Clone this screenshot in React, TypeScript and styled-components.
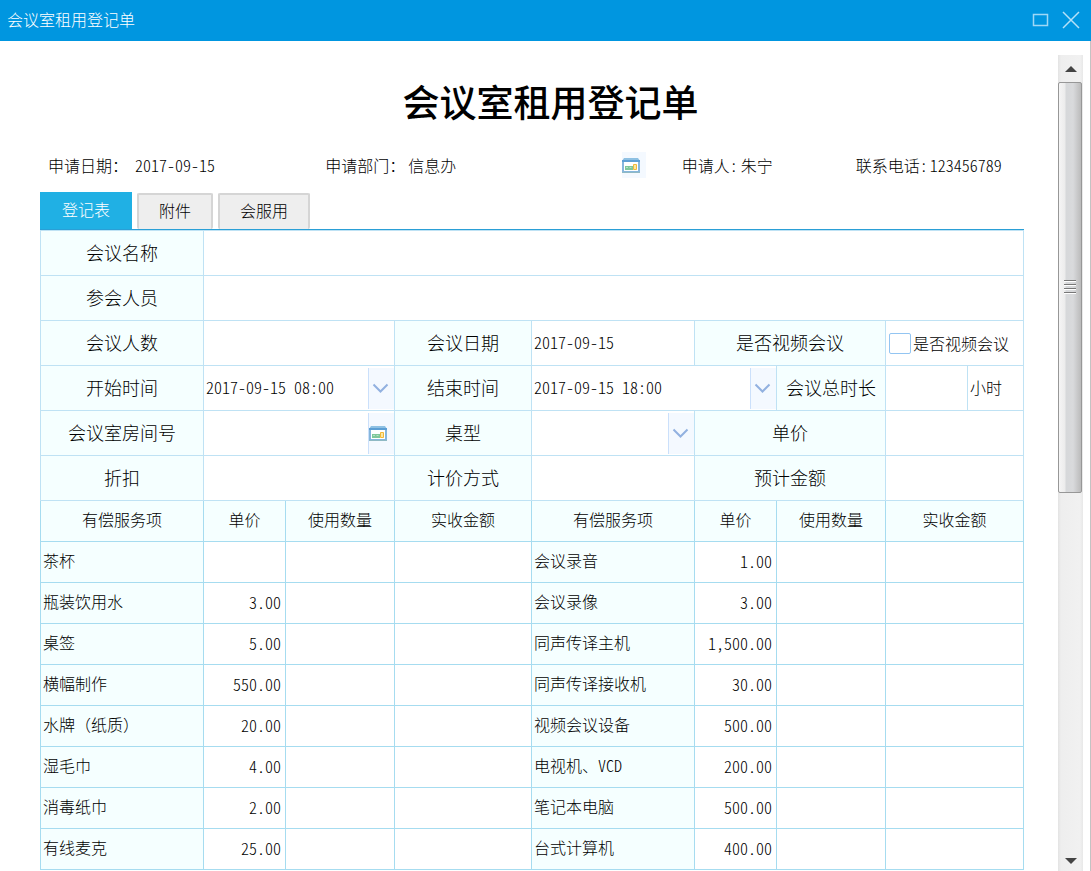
import React from 'react';
import styled, { createGlobalStyle } from 'styled-components';

const FONT = '"Noto Sans CJK SC", "Liberation Sans", sans-serif';
const LINE = '#bfe2f4';
const SERVICE_LINE = '#a6dcf0';
const LABEL_BG = '#f5ffff';

const GlobalStyle = createGlobalStyle`
  *, *::before, *::after { box-sizing: border-box; }
  body {
    margin: 0;
    background: #fff;
    color: #000;
    font: 300 16px/24px ${FONT};
    font-feature-settings: "hwid";
  }
  button, input, select {
    font: inherit;
    font-feature-settings: inherit;
    color: inherit;
  }
`;

const Window = styled.div`
  display: flex;
  flex-direction: column;
  height: 100vh;
`;

const TitleBar = styled.header`
  display: flex;
  flex: none;
  align-items: center;
  justify-content: space-between;
  height: 41px;
  padding: 0 9px 4px 7px;
  background: #0096e0;
  color: #fff;
`;

const WindowButtons = styled.div`
  display: flex;
  gap: 8px;
`;

const WindowButton = styled.button`
  display: flex;
  width: 22px;
  height: 22px;
  padding: 0;
  border: 0;
  background: none;
`;

const Body = styled.div`
  display: flex;
  flex: 1;
  min-height: 0;
  padding: 14px 7px 0 0;
  border-right: 1px solid #c3c3c3;
`;

const Content = styled.main`
  flex: 1;
  min-width: 0;
  overflow: auto;
  scrollbar-width: none;
  padding: 0 34px 0 40px;
`;

const Heading = styled.h1`
  margin: 18px 0 0;
  padding-left: 37px;
  font-size: 37px;
  line-height: 56px;
  font-weight: 500;
  text-align: center;
`;

const Summary = styled.div`
  display: grid;
  grid-template-columns: minmax(0, 277fr) minmax(0, 356fr) minmax(0, 174fr) minmax(0, 168fr);
  margin-top: 23px;
  padding-left: 8px;
  height: 26px;
`;

const SummaryField = styled.div`
  display: flex;
  align-items: center;
  padding-bottom: 2px;
`;

const SummaryInput = styled.input<{ $gap?: number }>`
  flex: 1;
  min-width: 0;
  height: 24px;
  margin: 0;
  padding: 0 0 0 ${(p) => p.$gap ?? 0}px;
  border: 0;
  background: none;
`;

const SummaryPicker = styled.button`
  flex: none;
  width: 24px;
  height: 26px;
  margin-right: 36px;
  padding: 0;
  border: 0;
  background: #f4f9ff;
  display: flex;
  align-items: center;
`;

const Tabs = styled.div`
  display: flex;
  align-items: flex-end;
  gap: 5px;
  height: 38px;
  margin-top: 14px;
  border-bottom: 1px solid #2a9fd6;
`;

const Tab = styled.button<{ $active?: boolean }>`
  height: ${(p) => (p.$active ? 37 : 36)}px;
  padding: 0 ${(p) => (p.$active ? 22 : 20)}px 4px;
  border: ${(p) => (p.$active ? '0' : '2px solid #d5d5d5')};
  border-bottom: 0;
  border-radius: ${(p) => (p.$active ? 0 : 2)}px;
  background: ${(p) => (p.$active ? '#20b0e4' : '#eee')};
  color: ${(p) => (p.$active ? '#fff' : '#000')};
`;

const FormTable = styled.table`
  width: 100%;
  table-layout: fixed;
  border-collapse: collapse;
`;

const FormRow = styled.tr`
  height: 45px;
`;

const FormLabel = styled.th`
  padding: 0 0 3px;
  border: 1px solid ${LINE};
  background: ${LABEL_BG};
  font-size: 18px;
  font-weight: 300;
  text-align: center;
`;

const FormCell = styled.td`
  padding: 0;
  border: 1px solid ${LINE};
`;

const ServiceRow = styled.tr`
  height: 41px;
`;

const ServiceHead = styled.th`
  padding: 0 0 4px;
  border: 1px solid ${SERVICE_LINE};
  background: ${LABEL_BG};
  font-weight: 300;
`;

const ServiceName = styled.td`
  padding: 0 2px 4px;
  border: 1px solid ${SERVICE_LINE};
  background: ${LABEL_BG};
`;

const FullWidth = styled.span`
  font-feature-settings: normal;
`;

const ServiceCell = styled.td`
  padding: 0 4px 2px 0;
  border: 1px solid ${SERVICE_LINE};
  text-align: right;
`;

const Field = styled.input`
  display: block;
  flex: 1;
  width: 100%;
  min-width: 0;
  height: 38px;
  padding: 0 2px 2px;
  border: 0;
  background: none;
`;

const Combo = styled.div`
  position: relative;
  display: flex;
  align-items: center;
`;

const ComboButton = styled.button`
  display: flex;
  flex: none;
  align-items: center;
  width: 26px;
  height: 41px;
  padding: 0;
  border: 0;
  border-left: 1px solid #cbe0fb;
  background: #f4f9ff;
`;

const Dropdown = styled.select`
  width: 100%;
  height: 41px;
  padding: 0 2px;
  border: 0;
  border-radius: 0;
  appearance: none;
  background: none;
`;

const DropdownMark = styled.span`
  position: absolute;
  top: 0;
  right: 0;
  display: flex;
  align-items: center;
  width: 26px;
  height: 41px;
  border-left: 1px solid #cbe0fb;
  background: #f4f9ff;
  pointer-events: none;
`;

const CheckLabel = styled.label`
  display: flex;
  align-items: center;
  gap: 2px;
  padding-left: 3px;
  white-space: nowrap;
`;

const CheckBox = styled.input`
  flex: none;
  width: 22px;
  height: 21px;
  margin: 0;
  appearance: none;
  border: 1px solid #93c5f2;
  border-radius: 2px;
  background: #fff;
  &:checked { background: #93c5f2; }
`;

const UnitCell = styled(FormCell)`
  padding: 0 2px 3px;
`;

const ScrollBar = styled.div`
  display: flex;
  flex: none;
  flex-direction: column;
  width: 25px;
  background: linear-gradient(90deg, #e3e3e3 0, #eee 3px, #f1f1f1 22px, #e8e8e8 100%);
`;

const ScrollButton = styled.button<{ $end?: boolean }>`
  display: flex;
  flex: none;
  align-items: center;
  justify-content: center;
  height: ${(p) => (p.$end ? 20 : 27)}px;
  padding: 0;
  border: 0;
  background: none;
`;

const Track = styled.div`
  flex: 1;
`;

const Thumb = styled.div`
  display: flex;
  align-items: center;
  justify-content: center;
  width: 24px;
  height: 53.4%;
  border: 1px solid #979797;
  border-radius: 2px;
  background: linear-gradient(90deg, #f5f5f5 0, #ececec 6px, #d6d8da 7px, #d9dadc 14px, #bbb 100%);
`;

const CalendarIcon = () => (
  <svg width="19" height="17" viewBox="0 0 19 17" aria-hidden="true">
    <path d="M2 1h14l2 3H0z" fill="#8fc1e3" />
    <path d="M1 4h16v11H1z" fill="#fff" stroke="#86b6dc" strokeWidth="2" />
    <path d="M0 3h18v2H0z" fill="#5d9fd4" />
    <path d="M0 15h18v1H0z" fill="#8fb9c4" />
    <path d="M3 9h8v4H3z" fill="#7fc79a" />
    <path d="M4 10.500h2M7.500 10.500h2" stroke="#b6e3c4" />
    <path d="M11.500 7.500h3v5h-3z" fill="#fbe6a2" stroke="#f0b93a" />
  </svg>
);

const ChevronIcon = () => (
  <svg width="24" height="16" viewBox="0 0 24 16" fill="none" stroke="#92b1e0" strokeWidth="2" aria-hidden="true">
    <path d="M4.500 4.500 11.500 11.500l7-7" />
  </svg>
);

interface TextCellProps {
  label: string;
  span?: number;
  value?: string;
}

const TextCell = ({ label, span = 1, value = '' }: TextCellProps) => (
  <FormCell colSpan={span}>
    <Field aria-label={label} defaultValue={value} />
  </FormCell>
);

const ComboCell = ({ label, span = 1, value = '', icon }: TextCellProps & { icon: React.ReactNode }) => (
  <FormCell colSpan={span}>
    <Combo>
      <Field aria-label={label} defaultValue={value} />
      <ComboButton type="button" aria-label={`选择${label}`}>{icon}</ComboButton>
    </Combo>
  </FormCell>
);

const COLUMNS = [163, 82, 109, 137, 163, 82, 109, 82, 56];

const SERVICE_HEADS = ['有偿服务项', '单价', '使用数量', '实收金额'];

const SERVICES: [string, string, string, string][] = [
  ['茶杯', '', '会议录音', '1.00'],
  ['瓶装饮用水', '3.00', '会议录像', '3.00'],
  ['桌签', '5.00', '同声传译主机', '1,500.00'],
  ['横幅制作', '550.00', '同声传译接收机', '30.00'],
  ['水牌（纸质）', '20.00', '视频会议设备', '500.00'],
  ['湿毛巾', '4.00', '电视机、VCD', '200.00'],
  ['消毒纸巾', '2.00', '笔记本电脑', '500.00'],
  ['有线麦克', '25.00', '台式计算机', '400.00'],
];

const ServiceItem = ({ name, price, last }: { name: string; price: string; last?: boolean }) => (
  <>
    <ServiceName>{name.includes('（') ? <FullWidth>{name}</FullWidth> : name}</ServiceName>
    <ServiceCell>{price}</ServiceCell>
    <ServiceCell><Field aria-label={`${name}使用数量`} /></ServiceCell>
    <ServiceCell colSpan={last ? 2 : 1} />
  </>
);

export default function App() {
  return (
    <Window>
      <GlobalStyle />
      <TitleBar>
        <span>会议室租用登记单</span>
        <WindowButtons>
          <WindowButton type="button" aria-label="最大化">
            <svg width="22" height="22" viewBox="0 0 22 22" fill="none" stroke="#9fd8f6">
              <rect x="3.500" y="6.500" width="14" height="11" strokeWidth="1.500" />
            </svg>
          </WindowButton>
          <WindowButton type="button" aria-label="关闭">
            <svg width="22" height="22" viewBox="0 0 22 22" fill="none" stroke="#b5e1f8" strokeWidth="1.500">
              <path d="M3 4l16 16M19 4 3 20" />
            </svg>
          </WindowButton>
        </WindowButtons>
      </TitleBar>
      <Body>
        <Content>
          <Heading>会议室租用登记单</Heading>
          <Summary>
            <SummaryField>
              <label htmlFor="date">申请日期：</label>
              <SummaryInput id="date" $gap={7} defaultValue="2017-09-15" />
            </SummaryField>
            <SummaryField>
              <label htmlFor="dept">申请部门：</label>
              <SummaryInput id="dept" $gap={3} defaultValue="信息办" />
              <SummaryPicker type="button" aria-label="选择部门"><CalendarIcon /></SummaryPicker>
            </SummaryField>
            <SummaryField>
              <label htmlFor="person">申请人:</label>
              <SummaryInput id="person" $gap={3} defaultValue="朱宁" />
            </SummaryField>
            <SummaryField>
              <label htmlFor="phone">联系电话:</label>
              <SummaryInput id="phone" $gap={2} defaultValue="123456789" />
            </SummaryField>
          </Summary>
          <Tabs role="tablist">
            <Tab type="button" role="tab" aria-selected="true" $active>登记表</Tab>
            <Tab type="button" role="tab" aria-selected="false">附件</Tab>
            <Tab type="button" role="tab" aria-selected="false">会服用</Tab>
          </Tabs>
          <FormTable>
            <colgroup>
              {COLUMNS.map((width, i) => <col key={i} width={width} />)}
            </colgroup>
            <tbody>
              <FormRow>
                <FormLabel>会议名称</FormLabel>
                <TextCell label="会议名称" span={8} />
              </FormRow>
              <FormRow>
                <FormLabel>参会人员</FormLabel>
                <TextCell label="参会人员" span={8} />
              </FormRow>
              <FormRow>
                <FormLabel>会议人数</FormLabel>
                <TextCell label="会议人数" span={2} />
                <FormLabel>会议日期</FormLabel>
                <TextCell label="会议日期" value="2017-09-15" />
                <FormLabel colSpan={2}>是否视频会议</FormLabel>
                <FormCell colSpan={2}>
                  <CheckLabel><CheckBox type="checkbox" />是否视频会议</CheckLabel>
                </FormCell>
              </FormRow>
              <FormRow>
                <FormLabel>开始时间</FormLabel>
                <ComboCell label="开始时间" span={2} value="2017-09-15 08:00" icon={<ChevronIcon />} />
                <FormLabel>结束时间</FormLabel>
                <ComboCell label="结束时间" span={2} value="2017-09-15 18:00" icon={<ChevronIcon />} />
                <FormLabel>会议总时长</FormLabel>
                <TextCell label="会议总时长" />
                <UnitCell>小时</UnitCell>
              </FormRow>
              <FormRow>
                <FormLabel>会议室房间号</FormLabel>
                <ComboCell label="会议室房间号" span={2} icon={<CalendarIcon />} />
                <FormLabel>桌型</FormLabel>
                <FormCell>
                  <Combo>
                    <Dropdown aria-label="桌型" defaultValue=""><option value="" /></Dropdown>
                    <DropdownMark><ChevronIcon /></DropdownMark>
                  </Combo>
                </FormCell>
                <FormLabel colSpan={2}>单价</FormLabel>
                <TextCell label="单价" span={2} />
              </FormRow>
              <FormRow>
                <FormLabel>折扣</FormLabel>
                <TextCell label="折扣" span={2} />
                <FormLabel>计价方式</FormLabel>
                <TextCell label="计价方式" />
                <FormLabel colSpan={2}>预计金额</FormLabel>
                <TextCell label="预计金额" span={2} />
              </FormRow>
              <ServiceRow>
                {[0, 1].map((side) =>
                  SERVICE_HEADS.map((head, i) => (
                    <ServiceHead key={`${side}${head}`} colSpan={side === 1 && i === 3 ? 2 : 1}>{head}</ServiceHead>
                  )),
                )}
              </ServiceRow>
              {SERVICES.map(([left, leftPrice, right, rightPrice]) => (
                <ServiceRow key={left}>
                  <ServiceItem name={left} price={leftPrice} />
                  <ServiceItem name={right} price={rightPrice} last />
                </ServiceRow>
              ))}
            </tbody>
          </FormTable>
        </Content>
        <ScrollBar>
          <ScrollButton type="button" aria-label="向上滚动">
            <svg width="12" height="6" viewBox="0 0 12 6"><path d="M6 0l6 6H0z" fill="#444" /></svg>
          </ScrollButton>
          <Track>
            <Thumb>
              <svg width="12" height="14" viewBox="0 0 12 14" fill="none">
                <path d="M0 1.500h12M0 5.500h12M0 9.500h12M0 13.500h12" stroke="#fff" />
                <path d="M0 .5h12M0 4.500h12M0 8.500h12M0 12.500h12" stroke="#777" />
              </svg>
            </Thumb>
          </Track>
          <ScrollButton type="button" aria-label="向下滚动" $end>
            <svg width="12" height="6" viewBox="0 0 12 6"><path d="M0 0h12L6 6z" fill="#444" /></svg>
          </ScrollButton>
        </ScrollBar>
      </Body>
    </Window>
  );
}
